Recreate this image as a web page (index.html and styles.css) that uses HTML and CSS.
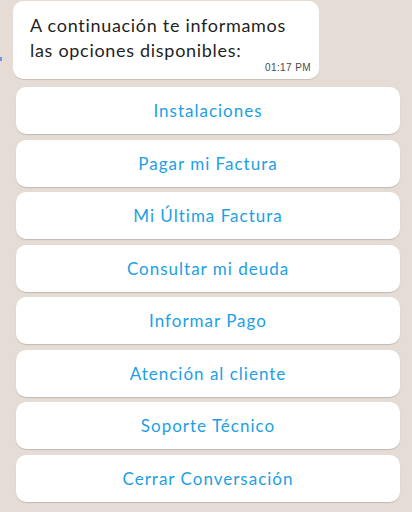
FILE: index.html
```html
<!DOCTYPE html>
<html lang="es">
<head>
<meta charset="utf-8">
<link rel="stylesheet" href="styles.css">
</head>
<body>
<div class="chat">
  <span class="dot"></span>
  <div class="bubble">
    <p class="msg">A continuación te informamos<br>las opciones disponibles:</p>
    <span class="time">01:17 PM</span>
  </div>
  <div class="options">
    <button class="opt">Instalaciones</button>
    <button class="opt">Pagar mi Factura</button>
    <button class="opt">Mi Última Factura</button>
    <button class="opt">Consultar mi deuda</button>
    <button class="opt">Informar Pago</button>
    <button class="opt">Atención al cliente</button>
    <button class="opt">Soporte Técnico</button>
    <button class="opt">Cerrar Conversación</button>
  </div>
</div>
</body>
</html>
```
FILE: styles.css
```css
html, body {
  margin: 0;
  padding: 0;
  background: #e5ddd5;
  width: 412px;
  height: 512px;
  overflow: hidden;
  font-family: Lato, "Noto Sans", sans-serif;
}
.chat {
  position: relative;
  padding: 1px 0 0 0;
}
.dot {
  position: absolute;
  left: 0;
  top: 57px;
  width: 2px;
  height: 4px;
  background: #7b8cf2;
}
.bubble {
  margin-left: 13px;
  width: 306px;
  box-sizing: border-box;
  background: #fff;
  border-radius: 10px;
  box-shadow: 0 1px 0.5px rgba(0,0,0,0.13);
  padding: 12px 8px 6px 17px;
  display: flex;
  flex-direction: column;
  height: 78px;
}
.msg {
  margin: 0;
  font-size: 18px;
  line-height: 25px;
  color: #1f1f1f;
  letter-spacing: 0.7px;
  white-space: nowrap;
}
.time {
  align-self: flex-end;
  font-family: "Liberation Sans", Arial, sans-serif;
  font-size: 10px;
  line-height: 12px;
  color: #4a4a4a;
  margin-top: -1px;
  letter-spacing: 0.4px;
}
.options {
  margin: 8px 12px 0 16px;
  display: flex;
  flex-direction: column;
  gap: 5.5px;
}
.opt {
  height: 47px;
  border: none;
  background: #fff;
  border-radius: 10px;
  box-shadow: 0 1px 1px rgba(0,0,0,0.16);
  font-family: Lato, "Noto Sans", sans-serif;
  font-size: 17px;
  color: #1d9fe3;
  letter-spacing: 1px;
  padding: 0;
  cursor: pointer;
}
```
